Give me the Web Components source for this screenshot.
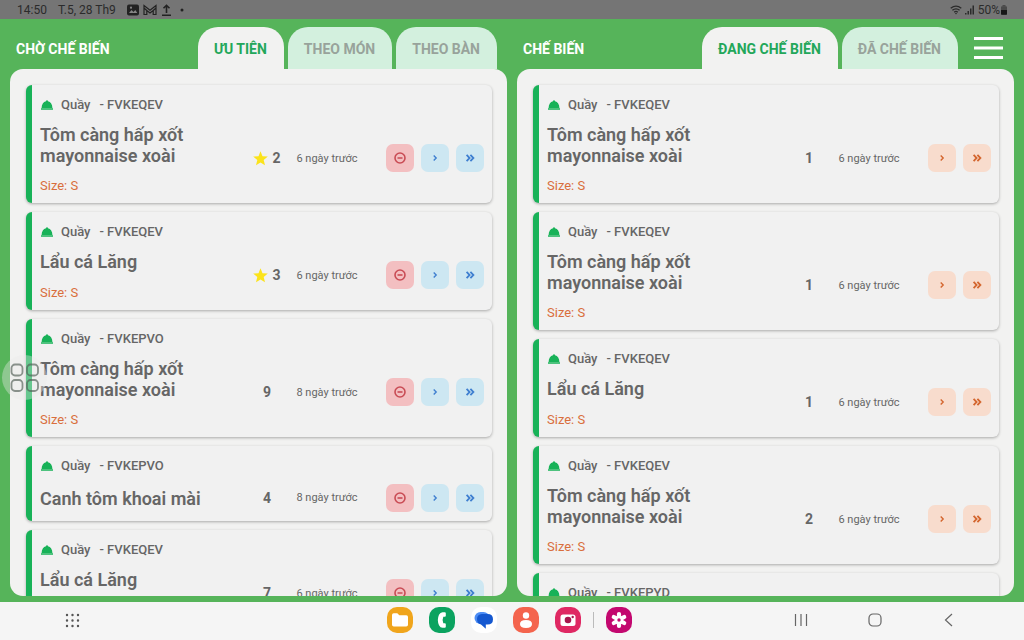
<!DOCTYPE html>
<html lang="vi">
<head>
<meta charset="utf-8">
<meta name="viewport" content="width=device-width, initial-scale=1">
<title>Chế biến</title>
<style>
  body {
    margin: 0;
    font-family: Roboto, "Noto Sans", sans-serif;
    color: #666;
  }
</style>
</head>
<body>
<kitchen-app></kitchen-app>

<script>
const define = (name, html, setup) => {
  const template = document.createElement("template");
  template.innerHTML = html;

  customElements.define(name, class extends HTMLElement {
    connectedCallback() {
      if (this.shadowRoot) return;
      this.attachShadow({ mode: "open" });
      this.shadowRoot.appendChild(template.content.cloneNode(true));
      if (setup) setup(this, this.shadowRoot);
    }
  });
};

const ICONS = {
  minus: `<svg width="14" height="14" viewBox="0 0 14 14" fill="none" stroke="currentColor" stroke-width="1.6"><circle cx="7" cy="7" r="5"/><path d="M4.5 7h5"/></svg>`,
  next: `<svg width="14" height="14" viewBox="0 0 14 14" fill="none" stroke="currentColor" stroke-width="1.4"><path d="M5.7 4.4 8.2 7 5.7 9.6"/></svg>`,
  all: `<svg width="14" height="14" viewBox="0 0 14 14" fill="none" stroke="currentColor" stroke-width="1.8"><path d="M3.6 3.9 6.6 7 3.6 10.1M7.4 3.9l3 3.1-3 3.1"/></svg>`
};

const LABELS = { minus: "Hủy", next: "Chuyển một", all: "Chuyển tất cả" };

// Barra de estado del dispositivo
define("status-bar", /* html */`
  <style>
    :host {
      display: flex;
      align-items: center;
      justify-content: space-between;
      height: 19px;
      padding: 0 16px 0 17px;
      background: #757575;
      color: #2b2b2b;
      font-size: 12px;
      line-height: 20px;
    }
    div { display: flex; align-items: center; }
    .date { margin: 0 11px 0 11px; }
    .icons { gap: 4px; }
    .signal { gap: 3px; }
    svg { display: block; }
  </style>
  <div>
    <span>14:50</span>
    <span class="date">T.5, 28 Th9</span>
    <div class="icons">
      <svg width="12" height="12" viewBox="0 0 12 12"><rect width="12" height="11" y=".5" rx="2" fill="#222"/><path d="M2 9l2.500-3 2 2L8.300 6 10.300 9z" fill="#858585"/><circle cx="4" cy="3.700" r="1.100" fill="#858585"/></svg>
      <svg width="14" height="12" viewBox="0 0 14 12" fill="none" stroke="#222" stroke-width="1.200"><path d="M1 10.500v-9l6 4.700 6-4.700v9h-2.800V6.500L7 9 3.800 6.500v4zM3.800 6.500 1 4M10.200 6.500 13 4"/></svg>
      <svg width="11" height="12" viewBox="0 0 11 12" fill="none" stroke="#222" stroke-width="1.600"><path d="M5.500 9V1.500M2.500 4.300l3-3 3 3M1 11.200h9"/></svg>
      <svg width="10" height="12" viewBox="0 0 10 12"><circle cx="6" cy="6" r="1.500" fill="#222"/></svg>
    </div>
  </div>
  <div class="signal">
    <svg width="12" height="10" viewBox="0 0 12 10" fill="none" stroke="#2b2b2b" stroke-width="1.300"><path d="M.7 3.300Q6-1 11.300 3.300M2.400 5.300Q6 2.300 9.600 5.300M4.200 7.200Q6 5.700 7.800 7.200"/><circle cx="6" cy="8.500" r=".8" fill="#2b2b2b" stroke="none"/></svg>
    <svg width="10" height="10" viewBox="0 0 10 10" fill="#2b2b2b"><path d="M0 8h1.500v1.500H0zM2.500 6H4v3.500H2.500zM5 3.500h1.500v6H5zM7.500.5H9v9H7.500z"/></svg>
    <div>50%<svg width="8" height="10" viewBox="0 0 8 10"><path d="M2.500 0h3v1.500h-3z" fill="#4a4a4a"/><rect x="1" y="1.200" width="6" height="8.500" rx="1" fill="#4a4a4a"/><path d="M1 5h6v4q0 .7-.7.7H1.700Q1 9.700 1 9z" fill="#161616"/></svg></div>
  </div>
`);

define("kitchen-tab", /* html */`
  <style>
    :host { display: block; }
    button {
      display: block;
      height: 42px;
      padding: 2px 17px 0 16px;
      border: 0;
      border-radius: 20px 20px 0 0;
      background: #d3f0de;
      color: #98a39b;
      font: 700 14px/40px Roboto, "Noto Sans", sans-serif;
      white-space: nowrap;
    }
    :host([active]) button {
      background: #f2f2f1;
      color: #23a75a;
    }
  </style>
  <button type="button" role="tab"><slot></slot></button>
`, (host, root) => {
  root.querySelector("button").setAttribute("aria-selected", host.hasAttribute("active"));
});

define("action-button", /* html */`
  <style>
    :host { display: block; }
    button {
      display: grid;
      place-items: center;
      width: 28px;
      height: 28px;
      padding: 0;
      border: 0;
      border-radius: 7px;
      background: var(--action-bg, #cde7f2);
      color: var(--action-color, #3f7fd0);
    }
    :host([kind="minus"]) button {
      background: #f3bfc1;
      color: #c94c55;
    }
    svg { display: block; }
  </style>
  <button type="button"></button>
`, (host, root) => {
  const kind = host.getAttribute("kind");
  const $button = root.querySelector("button");
  $button.innerHTML = ICONS[kind];
  $button.setAttribute("aria-label", LABELS[kind]);
});

define("order-card", /* html */`
  <style>
    :host {
      display: flex;
      flex-direction: column;
      flex: none;
      border-left: 6px solid #18b258;
      border-radius: 6px;
      background: #f1f1f1;
      box-shadow: 0 1px 3px rgba(0, 0, 0, .3);
    }
    header {
      display: flex;
      align-items: center;
      padding: 12px 8px 0;
      font-size: 13px;
      font-weight: 500;
      line-height: 16px;
    }
    header svg { margin: 0 8px 0 1px; }
    .code { margin-left: 9px; }
    .body {
      display: flex;
      align-items: center;
      min-height: 47px;
      padding: 0 8px;
    }
    .info {
      flex: 1;
      min-width: 0;
      padding: 11px 0 8px;
    }
    h3 {
      max-width: 200px;
      min-height: 22px;
      margin: 0;
      font-size: 18px;
      font-weight: 600;
      line-height: 21px;
    }
    p {
      margin: 11px 0 0;
      color: #d96e3c;
      font-size: 13px;
      line-height: 18px;
    }
    .count {
      display: flex;
      align-items: center;
      justify-content: center;
      gap: 4px;
      width: 50px;
      font-size: 14px;
      font-weight: 700;
    }
    .time {
      width: 70px;
      margin-right: 24px;
      font-size: 11px;
      text-align: center;
      white-space: nowrap;
    }
    .actions { display: flex; gap: 7px; }
    svg { display: block; }
    [hidden] { display: none; }
  </style>
  <header>
    <svg width="12" height="10" viewBox="0 0 12 10" fill="#18b258"><path d="M5 1.300Q5 .2 6 .2T7 1.300Q11.200 2.300 11.400 8H.6Q.8 2.300 5 1.300zM0 8.300h12v1.500H0z"/></svg>
    <span>Quầy</span>
    <span class="code"></span>
  </header>
  <div class="body">
    <div class="info">
      <h3><slot></slot></h3>
      <p hidden></p>
    </div>
    <div class="count">
      <svg class="star" hidden width="15" height="15" viewBox="0 0 15 15" fill="#fbe31b"><path d="M7.500.3l2 4.900 5.300.4-4.100 3.400 1.300 5.200-4.500-2.800L3 14.200 4.300 9 .2 5.600l5.300-.4z"/></svg>
      <span class="number"></span>
    </div>
    <div class="time"></div>
    <div class="actions"><slot name="action"></slot></div>
  </div>
`, (host, root) => {
  const size = host.getAttribute("size");
  root.querySelector(".code").textContent = `- ${host.getAttribute("code")}`;
  root.querySelector(".number").textContent = host.getAttribute("count");
  root.querySelector(".time").textContent = host.getAttribute("time");
  if (size) {
    root.querySelector("p").textContent = `Size: ${size}`;
    root.querySelector("p").hidden = false;
  }
  if (host.hasAttribute("priority")) root.querySelector(".star").removeAttribute("hidden");
});

define("kitchen-column", /* html */`
  <style>
    :host {
      display: flex;
      flex-direction: column;
      flex: 1;
      min-width: 0;
      min-height: 0;
    }
    header {
      display: flex;
      align-items: flex-end;
      padding: 8px 10px 0 6px;
    }
    h2 {
      flex: 1;
      margin: 0;
      padding-top: 2px;
      color: #fff;
      font-size: 14px;
      font-weight: 700;
      line-height: 40px;
      white-space: nowrap;
    }
    .tabs { display: flex; gap: 4px; }
    .list {
      display: flex;
      flex: 1;
      flex-direction: column;
      gap: 9px;
      min-height: 0;
      padding: 16px 15px 0 16px;
      border-radius: 13px;
      background: #f2f2f1;
      overflow: hidden;
    }
  </style>
  <header>
    <h2><slot name="title"></slot></h2>
    <div class="tabs" role="tablist"><slot name="tab"></slot></div>
    <slot name="menu"></slot>
  </header>
  <div class="list"><slot></slot></div>
`);

define("menu-button", /* html */`
  <style>
    :host { display: block; padding-left: 16px; }
    button {
      display: grid;
      place-items: center;
      width: 30px;
      height: 42px;
      padding: 0;
      border: 0;
      background: none;
    }
  </style>
  <button type="button" aria-label="Menu">
    <svg width="30" height="24" viewBox="0 0 30 24" fill="#fff"><path d="M0 1h29v3H0zM0 10.500h29v3H0zM0 20h29v3H0z"/></svg>
  </button>
`);

// Botón flotante del sistema
define("assist-bubble", /* html */`
  <style>
    :host {
      position: absolute;
      top: 355px;
      left: 2px;
    }
    button {
      display: grid;
      place-items: center;
      width: 45px;
      height: 45px;
      padding: 0;
      border: 0;
      border-radius: 50%;
      background: rgba(235, 235, 235, .38);
    }
  </style>
  <button type="button" aria-label="Trợ lý">
    <svg width="30" height="30" viewBox="0 0 30 30" fill="none" stroke="#505c55" stroke-opacity=".65" stroke-width="1.800"><rect x="1.500" y="1.500" width="11" height="11" rx="3.500"/><rect x="17" y="1.500" width="11" height="11" rx="3.500"/><rect x="1.500" y="17" width="11" height="11" rx="3.500"/><rect x="17" y="17" width="11" height="11" rx="3.500"/></svg>
  </button>
`);

define("nav-bar", /* html */`
  <style>
    :host {
      display: grid;
      grid-template-columns: 1fr auto 1fr;
      align-items: center;
      height: 38px;
      padding: 0 68px 2px 65px;
      box-sizing: border-box;
      background: #f5f5f5;
    }
    div { display: flex; align-items: center; }
    button {
      display: block;
      padding: 0;
      border: 0;
      background: none;
    }
    svg { display: block; }
    .dock { gap: 16px; padding-right: 2px; }
    .dock i {
      width: 1px;
      height: 16px;
      margin: 0 -4px;
      background: #bbb;
    }
    .system { justify-content: flex-end; gap: 60px; }
  </style>
  <div>
    <button type="button" aria-label="Ứng dụng">
      <svg width="15" height="15" viewBox="0 0 15 15" stroke="#555" stroke-width="2.400" stroke-linecap="round"><path d="M2 2h0M7.500 2h0M13 2h0M2 7.500h0M7.500 7.500h0M13 7.500h0M2 13h0M7.500 13h0M13 13h0"/></svg>
    </button>
  </div>
  <div class="dock">
    <button type="button" aria-label="Tệp">
      <svg width="26" height="26" viewBox="0 0 26 26"><rect width="26" height="26" rx="10" fill="#f0a51c"/><path d="M5 8q0-1.700 1.700-1.700h3.600l2 2h7q1.700 0 1.700 1.700v7.700q0 1.800-1.800 1.800H6.800Q5 19.500 5 17.700z" fill="#fff"/></svg>
    </button>
    <button type="button" aria-label="Điện thoại">
      <svg width="26" height="26" viewBox="0 0 26 26"><rect width="26" height="26" rx="10" fill="#0ba360"/><path d="M15.800 5.200q1 0 1 1v2.600q0 1-1 1h-1.500q-1.400 3.200 0 6.400h1.500q1 0 1 1v2.600q0 1-1 1h-2.300q-2.200 0-3.500-2.600-2.300-5.200 0-10.400 1.300-2.600 3.500-2.600z" fill="#fff"/></svg>
    </button>
    <button type="button" aria-label="Tin nhắn">
      <svg width="26" height="26" viewBox="0 0 26 26"><rect width="26" height="26" rx="10" fill="#fff"/><rect x="3.500" y="5" width="15" height="12" rx="6" fill="#4c8df5"/><path d="M11 7h5.500q5.500 0 5.500 5.200T16.500 17.500h-1.700v4.300L10 17.500Q6 16.500 6 12t5-5z" fill="#1558d0"/></svg>
    </button>
    <button type="button" aria-label="Danh bạ">
      <svg width="26" height="26" viewBox="0 0 26 26"><rect width="26" height="26" rx="10" fill="#f4644d"/><circle cx="13" cy="8.500" r="3.200" fill="#fff"/><path d="M7 17q0-4 6-4t6 4-6 4-6-4z" fill="#fff"/></svg>
    </button>
    <button type="button" aria-label="Máy ảnh">
      <svg width="26" height="26" viewBox="0 0 26 26"><rect width="26" height="26" rx="10" fill="#df2863"/><rect x="5.500" y="7.500" width="15" height="11.500" rx="2.500" fill="#fff"/><circle cx="13" cy="13" r="3.300" fill="#a8164d"/><circle cx="17.700" cy="10" r="1.200" fill="#a8164d"/></svg>
    </button>
    <i></i>
    <button type="button" aria-label="Bộ sưu tập">
      <svg width="26" height="26" viewBox="0 0 26 26"><rect width="26" height="26" rx="10" fill="#c3086f"/><g stroke="#fff" stroke-width="4.200" stroke-linecap="round"><path d="M13 7v2.500M13 16.500V19M7.800 10l2.200 1.200M16 14.800l2.200 1.200M7.800 16l2.200-1.200M16 11.200l2.200-1.200"/></g><circle cx="13" cy="13" r="2.800" fill="#fff"/><circle cx="13" cy="13" r="1.700" fill="#c3086f"/></svg>
    </button>
  </div>
  <div class="system">
    <button type="button" aria-label="Gần đây">
      <svg width="14" height="14" viewBox="0 0 14 14" stroke="#666" stroke-width="1.200"><path d="M1.500 1v12M7 1v12M12.500 1v12"/></svg>
    </button>
    <button type="button" aria-label="Màn hình chính">
      <svg width="14" height="14" viewBox="0 0 14 14" fill="none" stroke="#666" stroke-width="1.200"><rect x="1" y="1" width="12" height="12" rx="4"/></svg>
    </button>
    <button type="button" aria-label="Quay lại">
      <svg width="14" height="14" viewBox="0 0 14 14" fill="none" stroke="#666" stroke-width="1.200"><path d="M10 1 3.500 7l6.500 6"/></svg>
    </button>
  </div>
`);

const WAITING = [
  { code: "FVKEQEV", name: "Tôm càng hấp xốt mayonnaise xoài", size: "S", count: 2, time: "6 ngày trước", priority: true },
  { code: "FVKEQEV", name: "Lẩu cá Lăng", size: "S", count: 3, time: "6 ngày trước", priority: true },
  { code: "FVKEPVO", name: "Tôm càng hấp xốt mayonnaise xoài", size: "S", count: 9, time: "8 ngày trước" },
  { code: "FVKEPVO", name: "Canh tôm khoai mài", count: 4, time: "8 ngày trước" },
  { code: "FVKEQEV", name: "Lẩu cá Lăng", size: "S", count: 7, time: "6 ngày trước" }
];

const COOKING = [
  { code: "FVKEQEV", name: "Tôm càng hấp xốt mayonnaise xoài", size: "S", count: 1, time: "6 ngày trước" },
  { code: "FVKEQEV", name: "Tôm càng hấp xốt mayonnaise xoài", size: "S", count: 1, time: "6 ngày trước" },
  { code: "FVKEQEV", name: "Lẩu cá Lăng", size: "S", count: 1, time: "6 ngày trước" },
  { code: "FVKEQEV", name: "Tôm càng hấp xốt mayonnaise xoài", size: "S", count: 2, time: "6 ngày trước" },
  { code: "FVKEPYD", name: "", count: "", time: "" }
];

const renderCards = (orders, actions) => orders.map((order) => `
  <order-card code="${order.code}" count="${order.count}" time="${order.time}"
    ${order.size ? `size="${order.size}"` : ""} ${order.priority ? "priority" : ""}>
    ${order.name}
    ${actions.map((kind) => `<action-button slot="action" kind="${kind}"></action-button>`).join("")}
  </order-card>
`).join("");

define("kitchen-app", /* html */`
  <style>
    :host {
      position: relative;
      display: flex;
      flex-direction: column;
      height: 100vh;
      overflow: hidden;
    }
    main {
      display: flex;
      flex: 1;
      gap: 10px;
      min-height: 0;
      padding: 0 10px 6px;
      background: #56b45a;
    }
    .cooking {
      --action-bg: #f8dccd;
      --action-color: #d4662f;
    }
  </style>
  <status-bar></status-bar>
  <main>
    <kitchen-column class="waiting">
      <span slot="title">CHỜ CHẾ BIẾN</span>
      <kitchen-tab slot="tab" active>ƯU TIÊN</kitchen-tab>
      <kitchen-tab slot="tab">THEO MÓN</kitchen-tab>
      <kitchen-tab slot="tab">THEO BÀN</kitchen-tab>
      ${renderCards(WAITING, ["minus", "next", "all"])}
    </kitchen-column>
    <kitchen-column class="cooking">
      <span slot="title">CHẾ BIẾN</span>
      <kitchen-tab slot="tab" active>ĐANG CHẾ BIẾN</kitchen-tab>
      <kitchen-tab slot="tab">ĐÃ CHẾ BIẾN</kitchen-tab>
      <menu-button slot="menu"></menu-button>
      ${renderCards(COOKING, ["next", "all"])}
    </kitchen-column>
  </main>
  <nav-bar></nav-bar>
  <assist-bubble></assist-bubble>
`);
</script>
</body>
</html>
